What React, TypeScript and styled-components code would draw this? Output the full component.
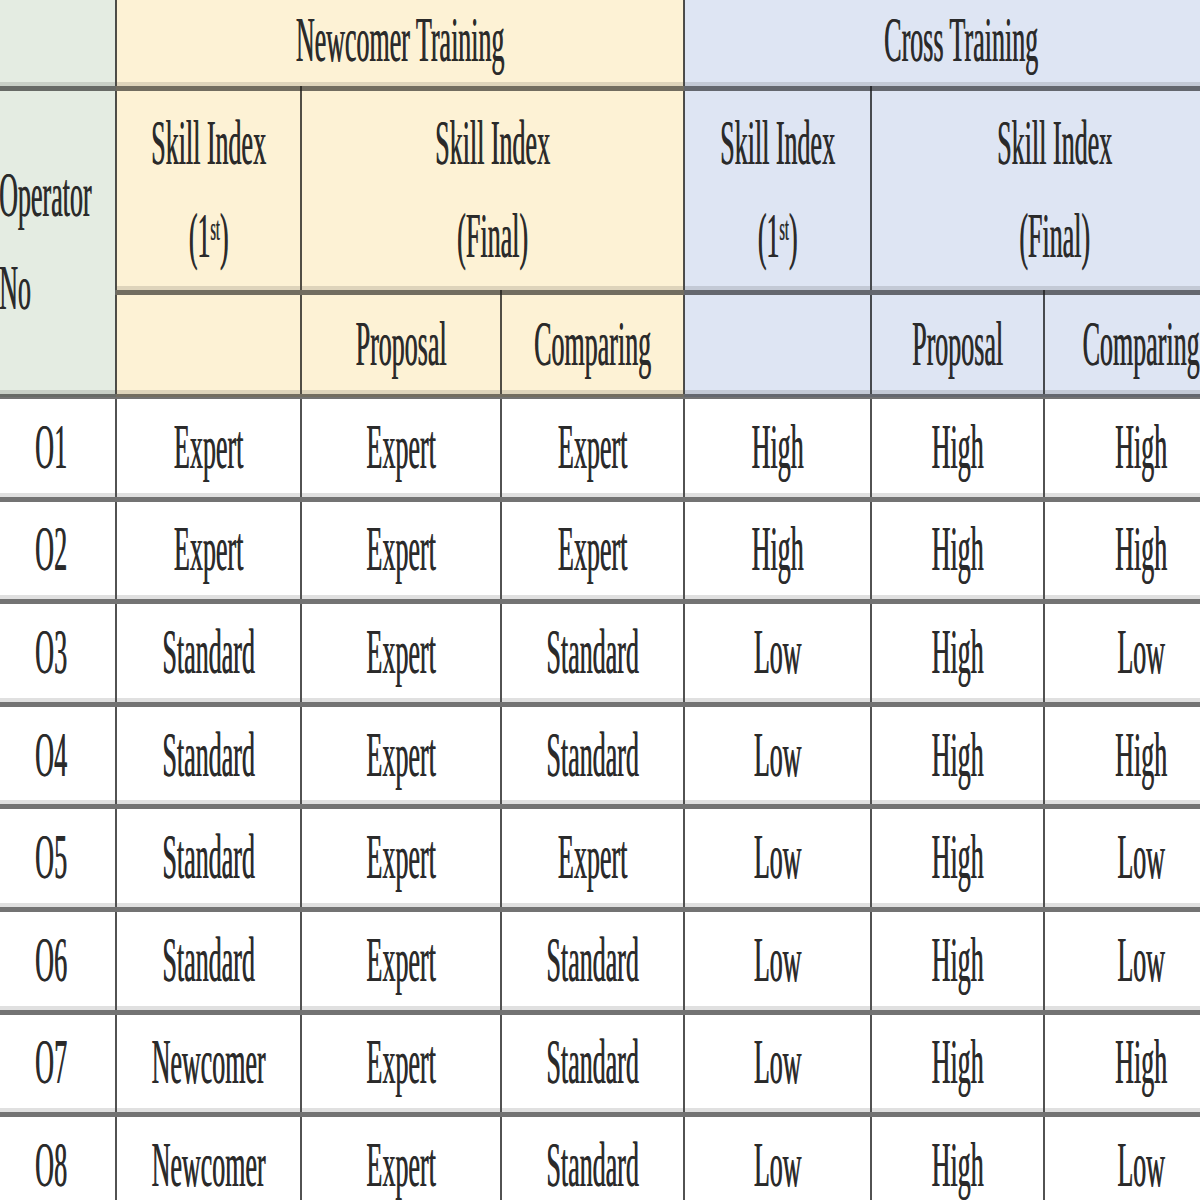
import React from 'react';
import styled, { createGlobalStyle } from 'styled-components';

type Tone = 'green' | 'yellow' | 'blue' | 'white';

const toneBg: Record<Tone, string> = {
    green: '#e4ece2',
    yellow: '#fdf2d5',
    blue: '#dee5f3',
    white: '#ffffff',
};

const rows: string[][] = [
    ['O1', 'Expert', 'Expert', 'Expert', 'High', 'High', 'High'],
    ['O2', 'Expert', 'Expert', 'Expert', 'High', 'High', 'High'],
    ['O3', 'Standard', 'Expert', 'Standard', 'Low', 'High', 'Low'],
    ['O4', 'Standard', 'Expert', 'Standard', 'Low', 'High', 'High'],
    ['O5', 'Standard', 'Expert', 'Expert', 'Low', 'High', 'Low'],
    ['O6', 'Standard', 'Expert', 'Standard', 'Low', 'High', 'Low'],
    ['O7', 'Newcomer', 'Expert', 'Standard', 'Low', 'High', 'High'],
    ['O8', 'Newcomer', 'Expert', 'Standard', 'Low', 'High', 'Low'],
];

const colWidths = [130, 185, 200, 183, 187, 173, 194];

const App = () => {
    return (
        <>
            <GlobalStyle />
            <Page>
                <Table>
                    <colgroup>
                        {colWidths.map((w, i) => (
                            <col key={i} style={{ width: w }} />
                        ))}
                    </colgroup>
                    <thead>
                        <TopRow>
                            <Cell $tone="green"></Cell>
                            <Cell $tone="yellow" colSpan={3}><Label>Newcomer Training</Label></Cell>
                            <Cell $tone="blue" colSpan={3}><Label>Cross Training</Label></Cell>
                        </TopRow>
                        <MidRow>
                            <Cell $tone="green" rowSpan={2} $left>
                                <Label $lines>Operator<br />No</Label>
                            </Cell>
                            <Cell $tone="yellow"><Label $lines>Skill Index<br />(1<Sup>st</Sup>)</Label></Cell>
                            <Cell $tone="yellow" colSpan={2}><Label $lines>Skill Index<br />(Final)</Label></Cell>
                            <Cell $tone="blue"><Label $lines>Skill Index<br />(1<Sup>st</Sup>)</Label></Cell>
                            <Cell $tone="blue" colSpan={2}><Label $lines>Skill Index<br />(Final)</Label></Cell>
                        </MidRow>
                        <SubRow>
                            <Cell $tone="yellow"></Cell>
                            <Cell $tone="yellow"><Label>Proposal</Label></Cell>
                            <Cell $tone="yellow"><Label>Comparing</Label></Cell>
                            <Cell $tone="blue"></Cell>
                            <Cell $tone="blue"><Label>Proposal</Label></Cell>
                            <Cell $tone="blue"><Label>Comparing</Label></Cell>
                        </SubRow>
                    </thead>
                    <tbody>
                        {rows.map((row, r) => (
                            <DataRow key={r}>
                                {row.map((v, c) => (
                                    <Cell key={c} $tone="white"><Label>{v}</Label></Cell>
                                ))}
                            </DataRow>
                        ))}
                    </tbody>
                </Table>
            </Page>
        </>
    );
};

const GlobalStyle = createGlobalStyle`
    html, body {
        margin : 0;
        padding : 0;
        background : #ffffff;
        overflow : hidden;
    }
`;

const Page = styled.div`
    width: 1200px;
    height: 1200px;
    overflow : hidden;
    background : #ffffff;
`;

const Table = styled.table`
    table-layout : fixed;
    width: 1252px;
    border-collapse : collapse;
    margin-top : -10px;
    margin-left : -15px;

    font-family : "Liberation Serif", "Times New Roman", serif;
    font-size : 26px;
    color : #2a2a2a;
`;

const TopRow = styled.tr`
    height: 96px;
`;

const MidRow = styled.tr`
    height: 204px;
`;

const SubRow = styled.tr`
    height: 104px;
`;

const DataRow = styled.tr`
    height: 102.6px;
`;

const Cell = styled.td<{ $tone: Tone; $left?: boolean }>`
    background : ${(p) => toneBg[p.$tone]};
    border-top : 5px solid rgba(0, 0, 0, 0.55);
    border-bottom : 5px solid rgba(0, 0, 0, 0.55);
    border-left : 2px solid rgba(0, 0, 0, 0.68);
    border-right : 2px solid rgba(0, 0, 0, 0.68);
    box-shadow : inset 0 -4px 0 rgba(0, 0, 0, 0.12);
    padding : 0;
    padding-left : ${(p) => (p.$left ? '12px' : '0')};
    text-align : ${(p) => (p.$left ? 'left' : 'center')};
    vertical-align : middle;
    white-space : nowrap;
`;

const Label = styled.span<{ $lines?: boolean }>`
    display : inline-block;
    line-height : ${(p) => (p.$lines ? '38px' : '1')};
    transform : scaleY(2.45);
    transform-origin : center;
    text-shadow : 0.5px 0 0 rgba(40, 40, 40, 0.8);
`;

const Sup = styled.sup`
    font-size : 14px;
    vertical-align : 7px;
    line-height : 0;
`;

export default App;
